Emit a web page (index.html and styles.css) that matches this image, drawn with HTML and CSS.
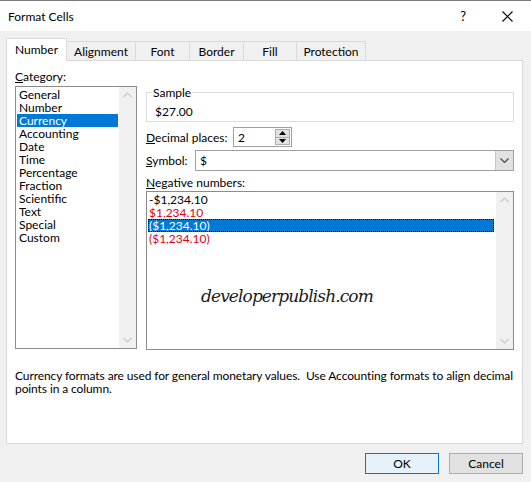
FILE: index.html
```html
<!DOCTYPE html>
<html>
<head>
<meta charset="utf-8">
<title>Format Cells</title>
<link rel="stylesheet" href="styles.css">
</head>
<body>
<div class="titlebar">
  <span class="title">Format Cells</span>
  <span class="help">?</span>
  <svg class="close" width="11" height="11" viewBox="0 0 11 11"><path d="M0.5 0.5 L10.5 10.5 M10.5 0.5 L0.5 10.5" stroke="#000" stroke-width="1.1" fill="none"/></svg>
</div>
<div class="tabs">
  <div class="tab active t-number">Number</div>
  <div class="tab t-align">Alignment</div>
  <div class="tab t-font">Font</div>
  <div class="tab t-border">Border</div>
  <div class="tab t-fill">Fill</div>
  <div class="tab t-prot">Protection</div>
</div>
<div class="panel">
  <div class="cols">
    <div class="leftcol">
      <div class="label"><u>C</u>ategory:</div>
      <div class="listbox catlist">
        <div class="items">
          <div class="item">General</div>
          <div class="item">Number</div>
          <div class="item sel">Currency</div>
          <div class="item">Accounting</div>
          <div class="item">Date</div>
          <div class="item">Time</div>
          <div class="item">Percentage</div>
          <div class="item">Fraction</div>
          <div class="item">Scientific</div>
          <div class="item">Text</div>
          <div class="item">Special</div>
          <div class="item">Custom</div>
        </div>
        <div class="scrollbar">
          <svg class="arrow" width="17" height="17" viewBox="0 0 17 17"><path d="M4.5 10 L8.5 6 L12.5 10" stroke="#c8c8c8" stroke-width="1.2" fill="none"/></svg>
          <svg class="arrow" width="17" height="17" viewBox="0 0 17 17"><path d="M4.5 7 L8.5 11 L12.5 7" stroke="#c8c8c8" stroke-width="1.2" fill="none"/></svg>
        </div>
      </div>
    </div>
    <div class="rightcol">
      <fieldset class="sample">
        <legend>Sample</legend>
        <div class="sample-val">$27.00</div>
      </fieldset>
      <div class="row dec-row">
        <div class="rlabel dec-label"><u>D</u>ecimal places:</div>
        <div class="spinbox">
          <span class="spin-val">2</span>
          <div class="spin-btns">
            <div class="spin-btn"><svg width="7" height="4" viewBox="0 0 7 4"><path d="M0 4 L3.5 0 L7 4 Z" fill="#000"/></svg></div>
            <div class="spin-btn"><svg width="7" height="4" viewBox="0 0 7 4"><path d="M0 0 L3.5 4 L7 0 Z" fill="#000"/></svg></div>
          </div>
        </div>
      </div>
      <div class="row sym-row">
        <div class="rlabel sym-label"><u>S</u>ymbol:</div>
        <div class="combo">
          <span class="combo-val">$</span>
          <div class="combo-btn"><svg width="9" height="5" viewBox="0 0 9 5"><path d="M0.5 0.5 L4.5 4.5 L8.5 0.5" stroke="#444" stroke-width="1.1" fill="none"/></svg></div>
        </div>
      </div>
      <div class="label neg-label"><u>N</u>egative numbers:</div>
      <div class="listbox neglist">
        <div class="items">
          <div class="item">-$1,234.10</div>
          <div class="item red">$1,234.10</div>
          <div class="item sel focus">($1,234.10)</div>
          <div class="item red">($1,234.10)</div>
          <div class="watermark">developerpublish.com</div>
        </div>
        <div class="scrollbar">
          <svg class="arrow" width="17" height="17" viewBox="0 0 17 17"><path d="M4.5 10 L8.5 6 L12.5 10" stroke="#c8c8c8" stroke-width="1.2" fill="none"/></svg>
          <svg class="arrow" width="17" height="17" viewBox="0 0 17 17"><path d="M4.5 7 L8.5 11 L12.5 7" stroke="#c8c8c8" stroke-width="1.2" fill="none"/></svg>
        </div>
      </div>
    </div>
  </div>
  <p class="desc">Currency formats are used for general monetary values.&nbsp; Use Accounting formats to align decimal<br>points in a column.</p>
</div>
<div class="buttons">
  <div class="btn ok">OK</div>
  <div class="btn cancel">Cancel</div>
</div>
</body>
</html>
```

FILE: styles.css
```css
html, body {
  margin: 0;
  padding: 0;
}
body {
  width: 531px;
  height: 482px;
  overflow: hidden;
  background: #f0f0f0;
  font-family: Lato, "Noto Sans", sans-serif;
  font-size: 12px;
  line-height: 13px;
  color: #000;
  box-sizing: border-box;
}
u {
  text-decoration: underline;
  text-underline-offset: 1px;
}

/* title bar */
.titlebar {
  height: 31px;
  box-sizing: border-box;
  background: #fff;
  border-top: 1px solid #7a7a7a;
  display: flex;
  align-items: center;
  padding-left: 8px;
}
.title {
  flex: 1;
}
.help {
  font-size: 13px;
  margin-right: 36px;
}
.close {
  margin-right: 18px;
}

/* tabs */
.tabs {
  display: flex;
  align-items: flex-end;
  height: 22px;
  margin-top: 7px;
  padding-left: 6px;
  position: relative;
  z-index: 1;
}
.tab {
  height: 19px;
  box-sizing: border-box;
  border: 1px solid #d9d9d9;
  border-bottom: none;
  background: #f0f0f0;
  margin-left: -1px;
  text-align: center;
  line-height: 19px;
}
.tab.active {
  height: 23px;
  margin-left: 0;
  margin-bottom: -1px;
  background: #fff;
  line-height: 22px;
  border-color: #d9d9d9;
}
.t-number { width: 61px; }
.t-align { width: 70px; }
.t-font { width: 55px; }
.t-border { width: 55px; }
.t-fill { width: 54px; }
.t-prot { width: 70px; }

/* panel */
.panel {
  margin: 0 8px 0 6px;
  height: 384px;
  box-sizing: border-box;
  border: 1px solid #d9d9d9;
  background: #fff;
  padding: 9px 8px 0 8px;
}
.cols {
  display: flex;
  gap: 9px;
}
.leftcol {
  width: 122px;
}
.rightcol {
  width: 368px;
}
.label {
  height: 13px;
}

.listbox {
  display: flex;
  border: 1px solid #8c8c8c;
  box-sizing: border-box;
  background: #fff;
}
.items {
  flex: 1;
  padding-left: 1px;
}
.item {
  height: 13px;
  line-height: 13px;
  padding-left: 2px;
  white-space: nowrap;
  box-sizing: border-box;
}
.item.sel {
  background: #0078d7;
  color: #fff;
}
.item.red {
  color: #e60012;
}
.scrollbar {
  width: 17px;
  background: #f0f0f0;
  display: flex;
  flex-direction: column;
  justify-content: space-between;
}
.arrow {
  display: block;
}
.catlist {
  margin-top: 3px;
  height: 263px;
}
.catlist .items {
  padding-top: 1px;
}
.catlist .item {
  margin-right: 1px;
}

/* right column */
.sample {
  margin: 16px 0 0 0;
  padding: 6px 0 3px 8px;
  border: 1px solid #dcdcdc;
  min-width: 0;
}
.sample legend {
  padding: 0 1px;
  margin-left: -3px;
  line-height: 13px;
}
.sample-val {
  height: 13px;
}

.row {
  display: flex;
  align-items: center;
}
.dec-row {
  margin-top: 5px;
}
.rlabel {
  white-space: nowrap;
}
.dec-label {
  width: 87px;
}
.spinbox {
  width: 59px;
  height: 20px;
  box-sizing: border-box;
  border: 1px solid #a0a0a0;
  display: flex;
  align-items: center;
  justify-content: space-between;
  padding: 1px;
  background: #fff;
}
.spin-val {
  padding-left: 3px;
}
.spin-btns {
  width: 15px;
  height: 16px;
  display: flex;
  flex-direction: column;
  border: 1px solid #adadad;
  box-sizing: border-box;
}
.spin-btn {
  flex: 1;
  background: #e1e1e1;
  display: flex;
  align-items: center;
  justify-content: center;
}
.spin-btn + .spin-btn {
  border-top: 1px solid #adadad;
}

.sym-row {
  margin-top: 3px;
}
.sym-label {
  width: 49px;
}
.combo {
  flex: 1;
  height: 21px;
  box-sizing: border-box;
  border: 1px solid #a0a0a0;
  display: flex;
  align-items: center;
  justify-content: space-between;
  background: #fff;
}
.combo-val {
  padding-left: 4px;
}
.combo-btn {
  width: 17px;
  height: 19px;
  background: #e1e1e1;
  border-left: 1px solid #c9c9c9;
  display: flex;
  align-items: center;
  justify-content: center;
}

.neg-label {
  margin-top: 5px;
}
.neglist {
  margin-top: 2px;
  height: 159px;
}
.neglist .items {
  padding-top: 1px;
  padding-right: 2px;
}
.neglist .item {
  padding-left: 1px;
}
.item.focus {
  outline: 1px dotted #000;
  outline-offset: -1px;
}
.watermark {
  margin-top: 39px;
  margin-left: 53px;
  font-family: "DejaVu Serif", serif;
  font-style: italic;
  font-size: 17px;
  letter-spacing: -0.9px;
  line-height: 24px;
  color: #1a1a1a;
  white-space: nowrap;
}

.desc {
  margin: 19px 0 0 0;
  line-height: 13px;
  letter-spacing: -0.1px;
  white-space: nowrap;
}

/* buttons */
.buttons {
  display: flex;
  justify-content: flex-end;
  gap: 10px;
  padding-right: 8px;
  margin-top: 9px;
}
.btn {
  width: 74px;
  height: 21px;
  box-sizing: border-box;
  display: flex;
  align-items: center;
  justify-content: center;
}
.ok {
  background: #e5f1fb;
  border: 1px solid #0078d7;
}
.cancel {
  background: #e1e1e1;
  border: 1px solid #adadad;
}
```
